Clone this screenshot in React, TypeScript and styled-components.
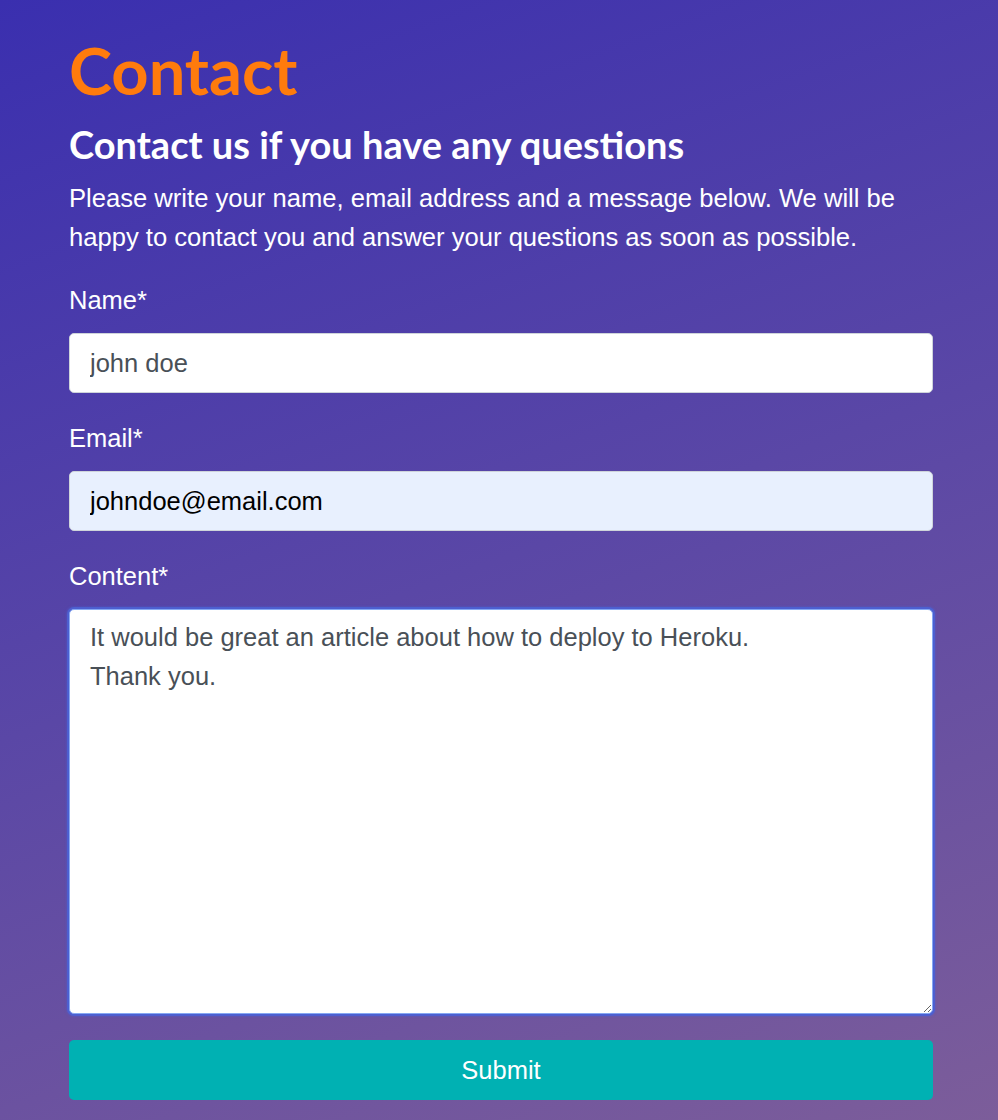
import React from "react";
import styled, { createGlobalStyle } from "styled-components";

const Global = createGlobalStyle`
  html, body { margin: 0; padding: 0; }
  body { font-family: "Liberation Sans", Arial, sans-serif; }
  * { box-sizing: border-box; }
`;

const Page = styled.div`
  min-height: 1120px;
  background: linear-gradient(160deg, #3a2faf 0%, #5a47a6 50%, #7c5d9a 100%);
  padding: 30px 65px 20px 69px;
`;

const Title = styled.h1`
  margin: 0;
  font-family: Lato, sans-serif;
  font-weight: 700;
  font-size: 65px;
  line-height: 80px;
  color: #ff7b0d;
`;

const Subtitle = styled.h2`
  margin: 11px 0 0;
  font-family: Lato, sans-serif;
  font-weight: 700;
  font-size: 38px;
  line-height: 46px;
  color: #ffffff;
`;

const Intro = styled.p`
  margin: 12px 0 0;
  font-size: 25.6px;
  line-height: 39px;
  color: #ffffff;
`;

const Form = styled.form`
  display: flex;
  flex-direction: column;
  margin-top: 27px;
`;

const Group = styled.div`
  display: flex;
  flex-direction: column;
  margin-bottom: 29px;
`;

const Label = styled.label`
  font-size: 25.5px;
  line-height: 33px;
  color: #ffffff;
  margin-bottom: 16px;
`;

const Input = styled.input<{ $autofill?: boolean }>`
  height: 60px;
  width: 100%;
  padding: 0 20px;
  border: 1px solid #ced4da;
  border-radius: 5px;
  font-family: "Liberation Sans", Arial, sans-serif;
  font-size: 25.5px;
  color: ${(p) => (p.$autofill ? "#000000" : "#495057")};
  background: ${(p) => (p.$autofill ? "#e8f0fe" : "#ffffff")};
  outline: none;
`;

const TextArea = styled.textarea`
  height: 405px;
  width: 100%;
  padding: 8px 20px;
  border: 1px solid #86a8f2;
  box-shadow: 0 0 0 2px #4d5fd0, 0 0 2px 3px rgba(77, 95, 208, 0.35);
  border-radius: 5px;
  font-family: "Liberation Sans", Arial, sans-serif;
  font-size: 25.5px;
  line-height: 39px;
  color: #495057;
  background: #ffffff;
  outline: none;
  resize: vertical;
`;

const Submit = styled.button`
  height: 60px;
  width: 100%;
  border: none;
  border-radius: 5px;
  background: #00b1b3;
  color: #ffffff;
  font-family: "Liberation Sans", Arial, sans-serif;
  font-size: 25.5px;
  cursor: pointer;
  margin-top: -3px;
`;

export default function App() {
  return (
    <>
      <Global />
      <Page>
        <Title>Contact</Title>
        <Subtitle>Contact us if you have any questions</Subtitle>
        <Intro>
          Please write your name, email address and a message below. We will be
          happy to contact you and answer your questions as soon as possible.
        </Intro>
        <Form onSubmit={(e) => e.preventDefault()}>
          <Group>
            <Label htmlFor="name">Name*</Label>
            <Input id="name" defaultValue="john doe" />
          </Group>
          <Group>
            <Label htmlFor="email">Email*</Label>
            <Input id="email" $autofill defaultValue="johndoe@email.com" />
          </Group>
          <Group>
            <Label htmlFor="content">Content*</Label>
            <TextArea
              id="content"
              defaultValue={"It would be great an article about how to deploy to Heroku.\nThank you."}
            />
          </Group>
          <Submit type="submit">Submit</Submit>
        </Form>
      </Page>
    </>
  );
}
